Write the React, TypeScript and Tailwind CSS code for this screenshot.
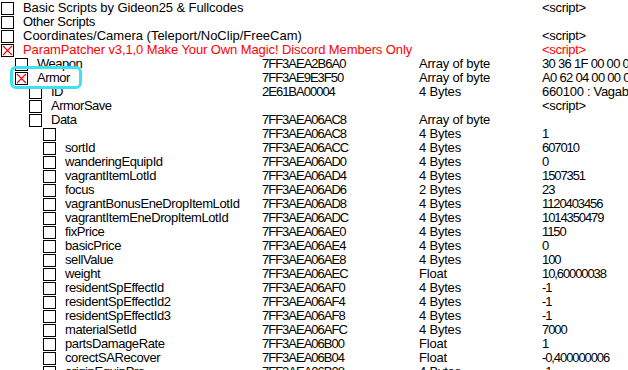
import React from 'react'

type Row = {
  name: string
  level: number
  addr?: string
  type?: string
  value?: string
  checked?: boolean
  red?: boolean
  track?: string
}

const rows: Row[] = [
  { name: 'Basic Scripts by Gideon25 & Fullcodes', level: 0, value: '<script>', track: 'tracking-[-0.1px]' },
  { name: 'Other Scripts', level: 0, track: 'tracking-[-0.3px]' },
  { name: 'Coordinates/Camera (Teleport/NoClip/FreeCam)', level: 0, value: '<script>', track: 'tracking-normal' },
  { name: 'ParamPatcher v3,1,0 Make Your Own Magic! Discord Members Only', level: 0, value: '<script>', checked: true, red: true, track: 'tracking-[-0.1px]' },
  { name: 'Weapon', level: 1, addr: '7FF3AEA2B6A0', type: 'Array of byte', value: '30 36 1F 00 00 00 00 00' },
  { name: 'Armor', level: 1, addr: '7FF3AE9E3F50', type: 'Array of byte', value: 'A0 62 04 00 00 00 00 00', checked: true },
  { name: 'ID', level: 2, addr: '2E61BA00004', type: '4 Bytes', value: '660100 : Vagabond Knight Helm' },
  { name: 'ArmorSave', level: 2, value: '<script>' },
  { name: 'Data', level: 2, addr: '7FF3AEA06AC8', type: 'Array of byte' },
  { name: '', level: 3, addr: '7FF3AEA06AC8', type: '4 Bytes', value: '1' },
  { name: 'sortId', level: 3, addr: '7FF3AEA06ACC', type: '4 Bytes', value: '607010' },
  { name: 'wanderingEquipId', level: 3, addr: '7FF3AEA06AD0', type: '4 Bytes', value: '0' },
  { name: 'vagrantItemLotId', level: 3, addr: '7FF3AEA06AD4', type: '4 Bytes', value: '1507351' },
  { name: 'focus', level: 3, addr: '7FF3AEA06AD6', type: '2 Bytes', value: '23' },
  { name: 'vagrantBonusEneDropItemLotId', level: 3, addr: '7FF3AEA06AD8', type: '4 Bytes', value: '1120403456' },
  { name: 'vagrantItemEneDropItemLotId', level: 3, addr: '7FF3AEA06ADC', type: '4 Bytes', value: '1014350479' },
  { name: 'fixPrice', level: 3, addr: '7FF3AEA06AE0', type: '4 Bytes', value: '1150' },
  { name: 'basicPrice', level: 3, addr: '7FF3AEA06AE4', type: '4 Bytes', value: '0' },
  { name: 'sellValue', level: 3, addr: '7FF3AEA06AE8', type: '4 Bytes', value: '100' },
  { name: 'weight', level: 3, addr: '7FF3AEA06AEC', type: 'Float', value: '10,60000038' },
  { name: 'residentSpEffectId', level: 3, addr: '7FF3AEA06AF0', type: '4 Bytes', value: '-1' },
  { name: 'residentSpEffectId2', level: 3, addr: '7FF3AEA06AF4', type: '4 Bytes', value: '-1' },
  { name: 'residentSpEffectId3', level: 3, addr: '7FF3AEA06AF8', type: '4 Bytes', value: '-1' },
  { name: 'materialSetId', level: 3, addr: '7FF3AEA06AFC', type: '4 Bytes', value: '7000' },
  { name: 'partsDamageRate', level: 3, addr: '7FF3AEA06B00', type: 'Float', value: '1' },
  { name: 'corectSARecover', level: 3, addr: '7FF3AEA06B04', type: 'Float', value: '-0,400000006' },
  { name: 'originEquipPro', level: 3, addr: '7FF3AEA06B08', type: '4 Bytes', value: '-1' },
]

const indents = ['pl-0', 'pl-[14px]', 'pl-[28px]', 'pl-[42px]']

// digits in the original font are narrower than Arial's, so numbers get tighter tracking
function valueTrack(v?: string) {
  if (!v) return ''
  if (/^[-0-9,]+$/.test(v)) return 'tracking-[-1.1px]'
  if (/^[0-9A-F ]+$/.test(v)) return 'tracking-[-0.7px]'
  return 'tracking-[-0.3px]'
}

function CheckBox({ checked }: { checked?: boolean }) {
  return (
    <div className="ml-[1px] mt-[1px] w-[13px] h-[13px] border border-black bg-white shrink-0">
      {checked && (
        <svg width="11" height="11" viewBox="0 0 11 11" className="block">
          <path d="M1 1 L10 10 M10 1 L1 10" stroke="#ff0000" strokeWidth="1.1" />
        </svg>
      )}
    </div>
  )
}

export default function App() {
  return (
    <div
      className="relative w-[628px] h-[370px] overflow-hidden bg-white text-black text-[13px] pt-px"
      style={{ fontFamily: '"Liberation Sans", Arial, sans-serif' }}
    >
      {rows.map((row, i) => (
        <div
          key={i}
          className={`flex h-[14px] leading-[14px] whitespace-nowrap ${row.red ? 'text-[#ff0000]' : ''}`}
        >
          <div className={`flex w-[262px] shrink-0 ${indents[row.level]}`}>
            <CheckBox checked={row.checked} />
            <span className={`ml-[9px] ${row.track ?? (row.level === 3 ? 'tracking-[-0.4px]' : 'tracking-[-0.5px]')}`}>
              {row.name}
            </span>
          </div>
          <div className="w-[157px] shrink-0 tracking-[-1px]">{row.addr}</div>
          <div className="w-[123px] shrink-0 tracking-[-0.2px]">{row.type}</div>
          <div className={`flex-1 overflow-hidden ${valueTrack(row.value)}`}>{row.value}</div>
        </div>
      ))}

      {/* highlight around Armor */}
      <div className="absolute left-[10px] top-[66px] w-[72px] h-[23px] rounded-[6px] border-[3px] border-[#3ee0f2] pointer-events-none" />
    </div>
  )
}
